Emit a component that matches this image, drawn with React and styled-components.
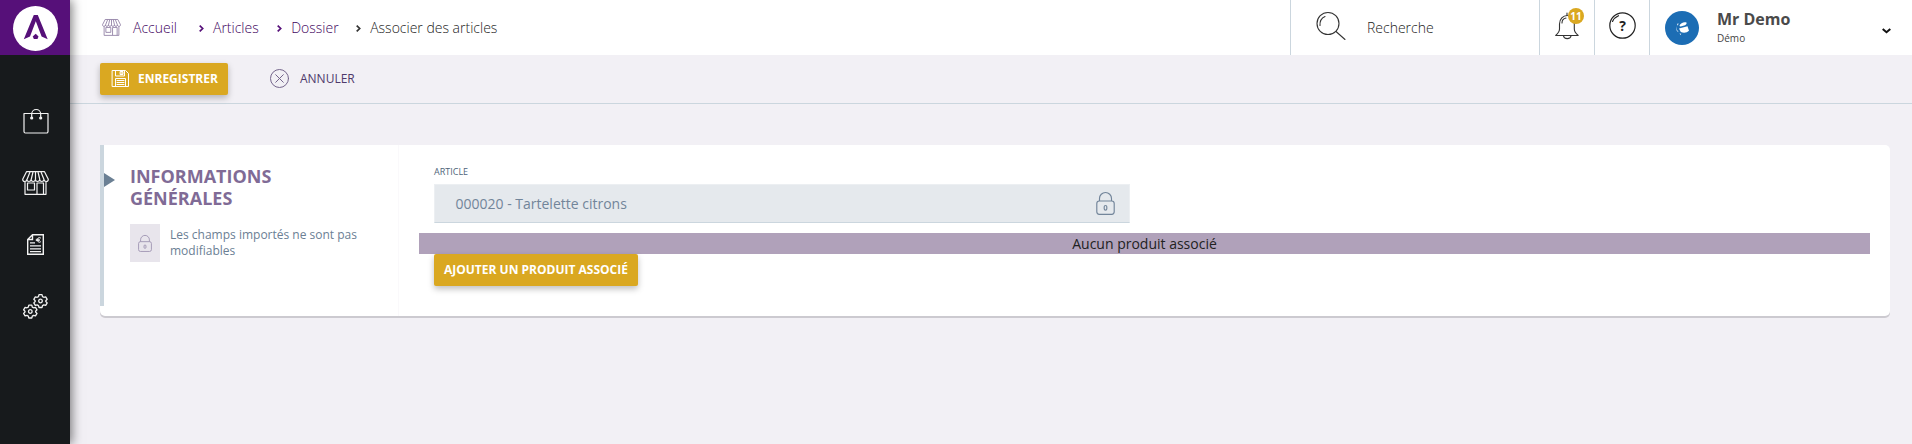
import React from 'react';
import styled, { createGlobalStyle } from 'styled-components';

const Global = createGlobalStyle`
  *, *::before, *::after { box-sizing: border-box; }
  body {
    margin: 0;
    background: #f2f0f5;
    font-family: "Open Sans", "Noto Sans", sans-serif;
    font-size: 14px;
    color: #4a4a4a;
  }
  svg { display: block; flex: none; overflow: visible; }
`;

const Page = styled.div`
  display: flex;
  height: 100vh;
  overflow: hidden;
`;

const Sidebar = styled.nav`
  flex: none;
  width: 70px;
  background: #171a1c;
  box-shadow: 2px 0 10px rgba(0, 0, 0, 0.5);
  position: relative;
  z-index: 1;
`;

const LogoCell = styled.div`
  height: 55px;
  background: #561079;
  display: flex;
  align-items: center;
  justify-content: center;
  padding: 2px 0 0 1px;
`;

const NavList = styled.div`
  padding-top: 36px;
`;

const NavItem = styled.div`
  height: 61.5px;
  display: flex;
  align-items: center;
  justify-content: center;
  padding-left: 1px;
`;

const Main = styled.div`
  flex: 1;
  min-width: 0;
`;

const Header = styled.header`
  height: 55px;
  background: #fff;
  display: flex;
`;

const Breadcrumb = styled.div`
  flex: 1;
  display: flex;
  align-items: center;
  padding-left: 32px;
`;

const Crumb = styled.span`
  font-weight: 300;
  line-height: 20px;
  color: ${p => (p.$current ? '#222' : '#3f0560')};
  margin-left: ${p => p.$gap}px;
`;

const Separator = styled.span`
  margin-left: ${p => p.$gap}px;
  padding-top: 2px;
`;

const Cell = styled.div`
  flex: none;
  width: ${p => p.$w}px;
  border-left: 1px solid #cbd6de;
  display: flex;
  padding: ${p => p.$pad};
`;

const SearchLabel = styled.span`
  margin-left: 21px;
  padding-top: 6px;
  font-weight: 300;
  line-height: 20px;
  color: #222;
`;

const BellWrap = styled.div`
  position: relative;
  width: 26px;
  height: 28px;
`;

const Badge = styled.span`
  position: absolute;
  left: 13px;
  top: -4px;
  width: 16px;
  height: 16px;
  border-radius: 50%;
  background: #daa821;
  color: #fff;
  font-size: 10px;
  font-weight: 700;
  line-height: 16px;
  text-align: center;
`;

const HelpGlyph = styled.div`
  position: relative;
  width: 27px;
  height: 27px;
`;

const HelpMark = styled.span`
  position: absolute;
  inset: 0;
  font-size: 14px;
  font-weight: 700;
  line-height: 27px;
  text-align: center;
  color: #222;
`;

const AvatarSlot = styled.div`
  padding-top: 3px;
`;

const User = styled.div`
  flex: 1;
  margin-left: 18px;
`;

const UserName = styled.div`
  font-size: 16px;
  font-weight: 700;
  line-height: 22px;
  color: #4a4a4a;
`;

const UserRole = styled.div`
  font-size: 10px;
  line-height: 14px;
  margin-top: 1px;
  color: #444;
`;

const Caret = styled.div`
  padding-top: 20px;
`;

const Toolbar = styled.div`
  height: 49px;
  border-bottom: 1px solid #cbd6de;
  display: flex;
  align-items: flex-start;
  padding: 8px 0 0 30px;
`;

const Button = styled.button`
  display: flex;
  align-items: center;
  width: ${p => p.$w}px;
  height: 32px;
  padding: 0 0 1px ${p => p.$pad}px;
  gap: 9px;
  border: 0;
  border-radius: 2px;
  background: #daa821;
  color: #fff;
  font: 700 12px "Open Sans", sans-serif;
  white-space: nowrap;
  box-shadow: 0 3px 6px rgba(0, 0, 0, 0.25);
`;

const Cancel = styled.button`
  display: flex;
  align-items: center;
  gap: 11px;
  height: 32px;
  margin-left: 42px;
  padding: 0 0 2px;
  border: 0;
  background: none;
  color: #4f3a6b;
  font: 400 12px "Open Sans", sans-serif;
`;

const Card = styled.section`
  display: flex;
  margin: 41px 22px 0 30px;
  height: 171px;
  background: #fff;
  border-radius: 0 5px 5px 5px;
  box-shadow: 0 2px 0 #cccad0;
`;

const CardAside = styled.div`
  flex: none;
  width: 299px;
  display: flex;
  align-items: flex-start;
  border-right: 1px solid #faf9fb;
`;

const Accent = styled.div`
  width: 4px;
  height: 161px;
  background: #cbd6de;
`;

const Arrow = styled.div`
  margin-top: 28px;
  border-style: solid;
  border-width: 7px 0 7px 11px;
  border-color: transparent transparent transparent #6b8094;
`;

const AsideBody = styled.div`
  padding: 20px 0 0 15px;
`;

const Title = styled.h2`
  margin: 0;
  width: 190px;
  font-size: 18px;
  font-weight: 700;
  line-height: 22px;
  color: #806b96;
`;

const Notice = styled.div`
  display: flex;
  margin-top: 15px;
`;

const NoticeIcon = styled.div`
  flex: none;
  width: 30px;
  height: 38px;
  background: #e8e5ec;
  display: flex;
  align-items: center;
  justify-content: center;
`;

const NoticeText = styled.p`
  margin: 3px 0 0 10px;
  width: 200px;
  font-size: 12px;
  line-height: 16px;
  color: #6b8094;
`;

const CardBody = styled.div`
  flex: 1;
  padding: 20px 20px 0;
`;

const Label = styled.div`
  margin-left: 15px;
  font-size: 9px;
  line-height: 14px;
  color: #50657a;
`;

const Field = styled.div`
  display: flex;
  align-items: center;
  justify-content: space-between;
  width: 696px;
  height: 39px;
  margin: 5px 0 10px 15px;
  padding: 0 14px 0 20.5px;
  border: 1px solid #eceff2;
  border-bottom-color: #cbd6de;
  background: #e5e9ed;
  color: #72859a;
`;

const Empty = styled.div`
  height: 21px;
  line-height: 21px;
  background: #b0a1ba;
  color: #222;
  text-align: center;
`;

const Actions = styled.div`
  padding-left: 15px;
`;

const Stroke = ({ w, h, color, sw = 1, children }) => (
  <svg width={w} height={h} viewBox={`0 0 ${w} ${h}`} fill="none" stroke={color} strokeWidth={sw} strokeLinejoin="round" strokeLinecap="round">
    {children}
  </svg>
);

const Logo = () => (
  <svg width="45" height="45" viewBox="0 0 45 45">
    <circle cx="22.5" cy="22.5" r="22.5" fill="#fff" />
    <path d="M20.8 9h4l9.900 24.300-6.100-2.800-5.800-15.300-5.800 15.300-6.200 2.800z" fill="#561079" />
    <path d="M22.700 27.700l2.800 2.800-1 2.600h-3.600l-1.200-2.600z" fill="#561079" />
  </svg>
);

const Bag = () => (
  <Stroke w={26} h={25} color="#f2f2f2" sw={1.2}>
    <path d="M1 4.500h24v18a1.500 1.500 0 0 1-1.500 1.500h-21A1.500 1.500 0 0 1 1 22.500z" />
    <path d="M8.700 9V5a4.500 4.500 0 0 1 9 0v4" />
    <circle cx="8.7" cy="9" r="1" fill="#f2f2f2" />
    <circle cx="17.7" cy="9" r="1" fill="#f2f2f2" />
  </Stroke>
);

const Shop = ({ size = 27, color = '#f2f2f2', sw = 1.2 }) => (
  <svg width={size} height={(size * 24) / 27} viewBox="0 0 27 24" fill="none" stroke={color} strokeWidth={sw} strokeLinejoin="round">
    <path d="M4.500.7h18l3.800 7.500c0 3-3.900 3-4.300.4-.3 2.500-4 2.500-4.300 0-.3 2.500-4.100 2.500-4.300 0-.3 2.500-4 2.500-4.300 0-.3 2.500-4 2.500-4.300 0C4.600 11.200.7 11.200.7 8.200z" />
    <path d="M8 1L5 8.500M11 1L9.200 8.500M13.500 1v7.500M16 1l1.800 7.500M19 1l3 7.500M3 10.500v12.800h21V10.500M5.500 12h7v7h-7zM15 23V12h6.500v11" />
  </svg>
);

const Invoice = () => (
  <svg width="17" height="21" viewBox="0 0 17 21" fill="none" stroke="#f2f2f2" strokeWidth="1.4">
    <path d="M5.500.7h10.800v19.600H.7V5.500zM5.500.7v4.800H.7" />
    <path d="M3 8.900h5M3 11.900h11M3 14.800h11M3 17.600h11" strokeWidth="1.2" />
    <path d="M13.900 4.100a2.300 2.300 0 1 0 0 3.600M8.800 5.300h4M8.800 6.600h4" strokeWidth="1" />
  </svg>
);

const gear = 'M-1.500-6.300h3l.5 1.900 1.300.7 1.900-.5 1.500 2.500-1.400 1.400v.8l1.400 1.400-1.500 2.500-1.900-.5-1.300.7-.5 1.900h-3l-.5-1.900-1.300-.7-1.900.5-1.500-2.500 1.400-1.400v-.8l-1.400-1.400 1.500-2.500 1.900.5 1.300-.7z';

const Gears = () => (
  <Stroke w={25} h={25} color="#f2f2f2" sw={1.3}>
    <g transform="translate(17.5 7)"><path d={gear} /><circle r="1.8" /></g>
    <g transform="translate(7.3 17.5)"><path d={gear} /><circle r="1.8" /></g>
  </Stroke>
);

const Chevron = ({ color }) => (
  <svg width="5" height="7" viewBox="0 0 5 7" fill="none" stroke={color} strokeWidth="1.7">
    <path d="M.7.6l3 2.900-3 2.900" />
  </svg>
);

const Magnifier = () => (
  <Stroke w={30} h={28} color="#333" sw={1.1}>
    <circle cx="12" cy="11.5" r="11" />
    <path d="M20 19.500l9 8M4 13.500c-.3-4.500 1.500-7.500 5-9" />
  </Stroke>
);

const Bell = () => (
  <Stroke w={24} h={28} color="#333" sw={1.1}>
    <path d="M.7 23.500c2.500-2.300 3.800-3.800 3.800-6.500v-5c0-5 3.500-8.500 7.800-8.500s7 3.500 7 8.500v5c0 2.700 1.300 4.200 3.900 6.500zM8.500 24c.5 3.500 7 3.500 7.500 0M12 3V1M7 11c0-2.500 1.500-4.500 4-5" />
  </Stroke>
);

const Avatar = () => (
  <svg width="34" height="34" viewBox="0 0 34 34">
    <circle cx="17" cy="17" r="17" fill="#1c6db4" />
    <path d="M14.500 14.500c1-2.500 4.500-4 7-3 .6 2-1.500 3.300-6.500 4zM14 17.500l8.500-2.300 1.500 4.600c-2 2-5.500 2.300-8.200 1.200zM12 13l1.500-.8-.6 2.600zM11 15l1.200 4.200 1.600 2-2-1.200zM14.500 22.500l1.800.3-.8 1.200z" fill="#fff" />
  </svg>
);

const Floppy = () => (
  <Stroke w={17} h={17} color="#fff" sw={1}>
    <path d="M.5.5h13l3 3v13H.5zM3.500.5v5.500h9V.5M3.500 16.500v-8h10v8M5 10.500h7M5 12.500h7M5 14.500h7" />
    <path d="M8.500 1.500h2.500v3H8.500z" fill="#fff" fillOpacity=".6" />
  </Stroke>
);

const CircleX = () => (
  <Stroke w={19} h={19} color="#75668c" sw={1}>
    <circle cx="9.5" cy="9.5" r="9" />
    <path d="M5.700 5.700l7.600 7.600M13.300 5.700l-7.600 7.600" />
  </Stroke>
);

const Lock = ({ w, h, color }) => (
  <svg width={w} height={h} viewBox="0 0 19 23" fill="none" stroke={color} strokeWidth="1.15">
    <rect x=".8" y="9" width="17.4" height="13.3" rx="2.5" />
    <path d="M3.500 9V6.500a6 6 0 0 1 12 0V9" />
    <rect x="8.2" y="13.5" width="2.6" height="4.6" rx="1.3" />
  </svg>
);

const trail = [
  { text: 'Articles', sep: 22, gap: 9 },
  { text: 'Dossier', sep: 18.5, gap: 9 },
  { text: 'Associer des articles', sep: 17.5, gap: 9, current: true },
];

export default function App() {
  return (
    <Page>
      <Global />
      <Sidebar>
        <LogoCell><Logo /></LogoCell>
        <NavList>
          <NavItem><Bag /></NavItem>
          <NavItem><Shop /></NavItem>
          <NavItem><Invoice /></NavItem>
          <NavItem><Gears /></NavItem>
        </NavList>
      </Sidebar>
      <Main>
        <Header>
          <Breadcrumb>
            <Shop size={19} color="#8d7ba1" />
            <Crumb $gap={12}>Accueil</Crumb>
            {trail.map(t => (
              <React.Fragment key={t.text}>
                <Separator $gap={t.sep}><Chevron color={t.current ? '#333' : '#561079'} /></Separator>
                <Crumb $gap={t.gap} $current={t.current}>{t.text}</Crumb>
              </React.Fragment>
            ))}
          </Breadcrumb>
          <Cell $w={249} $pad="12px 0 0 25px">
            <Magnifier />
            <SearchLabel>Recherche</SearchLabel>
          </Cell>
          <Cell $w={55} $pad="12px 0 0 15px">
            <BellWrap><Bell /><Badge>11</Badge></BellWrap>
          </Cell>
          <Cell $w={55} $pad="12px 0 0 14px">
            <HelpGlyph>
              <Stroke w={27} h={27} color="#222" sw={1.2}>
                <circle cx="13.5" cy="13.5" r="12.7" />
                <path d="M3.500 9.500c1-2.500 3-4.500 6-5.800" />
              </Stroke>
              <HelpMark>?</HelpMark>
            </HelpGlyph>
          </Cell>
          <Cell $w={263} $pad="8px 21px 0 15px">
            <AvatarSlot><Avatar /></AvatarSlot>
            <User>
              <UserName>Mr Demo</UserName>
              <UserRole>Démo</UserRole>
            </User>
            <Caret>
              <svg width="9" height="6" viewBox="0 0 9 6" fill="none" stroke="#111" strokeWidth="2"><path d="M.7.9l3.800 3.300L8.300.9" /></svg>
            </Caret>
          </Cell>
        </Header>
        <Toolbar>
          <Button $w={128} $pad={12}><Floppy />ENREGISTRER</Button>
          <Cancel><CircleX />ANNULER</Cancel>
        </Toolbar>
        <Card>
          <CardAside>
            <Accent />
            <Arrow />
            <AsideBody>
              <Title>INFORMATIONS GÉNÉRALES</Title>
              <Notice>
                <NoticeIcon><Lock w={14} h={17} color="#9a8fae" /></NoticeIcon>
                <NoticeText>Les champs importés ne sont pas modifiables</NoticeText>
              </Notice>
            </AsideBody>
          </CardAside>
          <CardBody>
            <Label>ARTICLE</Label>
            <Field>
              000020 - Tartelette citrons
              <Lock w={19} h={23} color="#72859a" />
            </Field>
            <Empty>Aucun produit associé</Empty>
            <Actions><Button $w={204} $pad={10}>AJOUTER UN PRODUIT ASSOCIÉ</Button></Actions>
          </CardBody>
        </Card>
      </Main>
    </Page>
  );
}
